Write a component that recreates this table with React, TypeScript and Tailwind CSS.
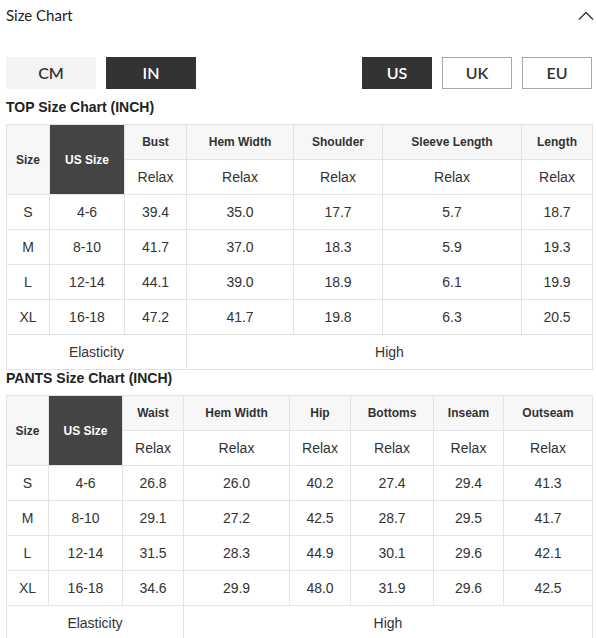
import type { ReactNode } from "react";

type Chart = {
  title: string;
  cols: number[];
  heads: string[];
  rows: string[][];
  elasticSpan: number;
};

const TOP: Chart = {
  title: "TOP Size Chart (INCH)",
  cols: [43, 75, 62, 107, 89, 139, 71],
  heads: ["Bust", "Hem Width", "Shoulder", "Sleeve Length", "Length"],
  rows: [
    ["S", "4-6", "39.4", "35.0", "17.7", "5.7", "18.7"],
    ["M", "8-10", "41.7", "37.0", "18.3", "5.9", "19.3"],
    ["L", "12-14", "44.1", "39.0", "18.9", "6.1", "19.9"],
    ["XL", "16-18", "47.2", "41.7", "19.8", "6.3", "20.5"],
  ],
  elasticSpan: 3,
};

const PANTS: Chart = {
  title: "PANTS Size Chart (INCH)",
  cols: [42, 74, 61, 106, 61, 83, 70, 89],
  heads: ["Waist", "Hem Width", "Hip", "Bottoms", "Inseam", "Outseam"],
  rows: [
    ["S", "4-6", "26.8", "26.0", "40.2", "27.4", "29.4", "41.3"],
    ["M", "8-10", "29.1", "27.2", "42.5", "28.7", "29.5", "41.7"],
    ["L", "12-14", "31.5", "28.3", "44.9", "30.1", "29.6", "42.1"],
    ["XL", "16-18", "34.6", "29.9", "48.0", "31.9", "29.6", "42.5"],
  ],
  elasticSpan: 3,
};

function Btn({ children, variant }: { children: ReactNode; variant: "light" | "dark" | "outline" }) {
  const styles = {
    light: "bg-[#f4f4f4] text-[#333]",
    dark: "bg-[#333] text-white",
    outline: "bg-white text-[#333] border border-[#a8a8a8]",
  };
  return (
    <div className={`h-[32px] flex items-center justify-center text-[16px] font-semibold ${styles[variant]}`}>
      {children}
    </div>
  );
}

function SizeTable({ chart }: { chart: Chart }) {
  const cell = "border border-[#e3e3e3] text-center p-0";
  return (
    <>
      <div className="mb-[9px] h-[16px] leading-[16px] text-[14px] font-bold text-[#222]">{chart.title}</div>
      <table className="border-collapse table-fixed w-[586px] text-[#333]">
        <colgroup>
          {chart.cols.map((w, i) => (
            <col key={i} style={{ width: w }} />
          ))}
        </colgroup>
        <tbody>
          <tr className="h-[35px] bg-[#f7f7f7] text-[12px] font-bold">
            <td rowSpan={2} className={cell}>Size</td>
            <td rowSpan={2} className={`${cell} bg-[#444] text-white`}>US Size</td>
            {chart.heads.map((h) => (
              <td key={h} className={cell}>{h}</td>
            ))}
          </tr>
          <tr className="h-[35px] text-[14px]">
            {chart.heads.map((h) => (
              <td key={h} className={cell}>Relax</td>
            ))}
          </tr>
          {chart.rows.map((r) => (
            <tr key={r[0]} className="h-[35px] text-[14px]">
              {r.map((v, i) => (
                <td key={i} className={cell}>{v}</td>
              ))}
            </tr>
          ))}
          <tr className="h-[35px] text-[14px]">
            <td colSpan={chart.elasticSpan} className={cell}>Elasticity</td>
            <td colSpan={chart.cols.length - chart.elasticSpan} className={cell}>High</td>
          </tr>
        </tbody>
      </table>
    </>
  );
}

export default function App() {
  return (
    <div className="w-[596px] h-[638px] overflow-hidden bg-white px-[6px] font-['Liberation_Sans',Arial,sans-serif]">
      <div className="h-[31px] flex items-center justify-between">
        <span className="font-['Lato',sans-serif] text-[15px] text-[#222]">Size Chart</span>
        <svg width="16" height="10" viewBox="0 0 16 10" className="-mr-[4px]">
          <path d="M1 8.5 L8 1.5 L15 8.5" fill="none" stroke="#333" strokeWidth="1.3" />
        </svg>
      </div>

      <div className="mt-[26px] mb-[10px] flex font-['Lato',sans-serif]">
        <div className="grid grid-cols-[90px_90px] gap-[10px]">
          <Btn variant="light">CM</Btn>
          <Btn variant="dark">IN</Btn>
        </div>
        <div className="ml-auto -mr-[2px] grid grid-cols-[70px_70px_70px] gap-[10px]">
          <Btn variant="dark">US</Btn>
          <Btn variant="outline">UK</Btn>
          <Btn variant="outline">EU</Btn>
        </div>
      </div>

      <SizeTable chart={TOP} />
      <SizeTable chart={PANTS} />
    </div>
  );
}
